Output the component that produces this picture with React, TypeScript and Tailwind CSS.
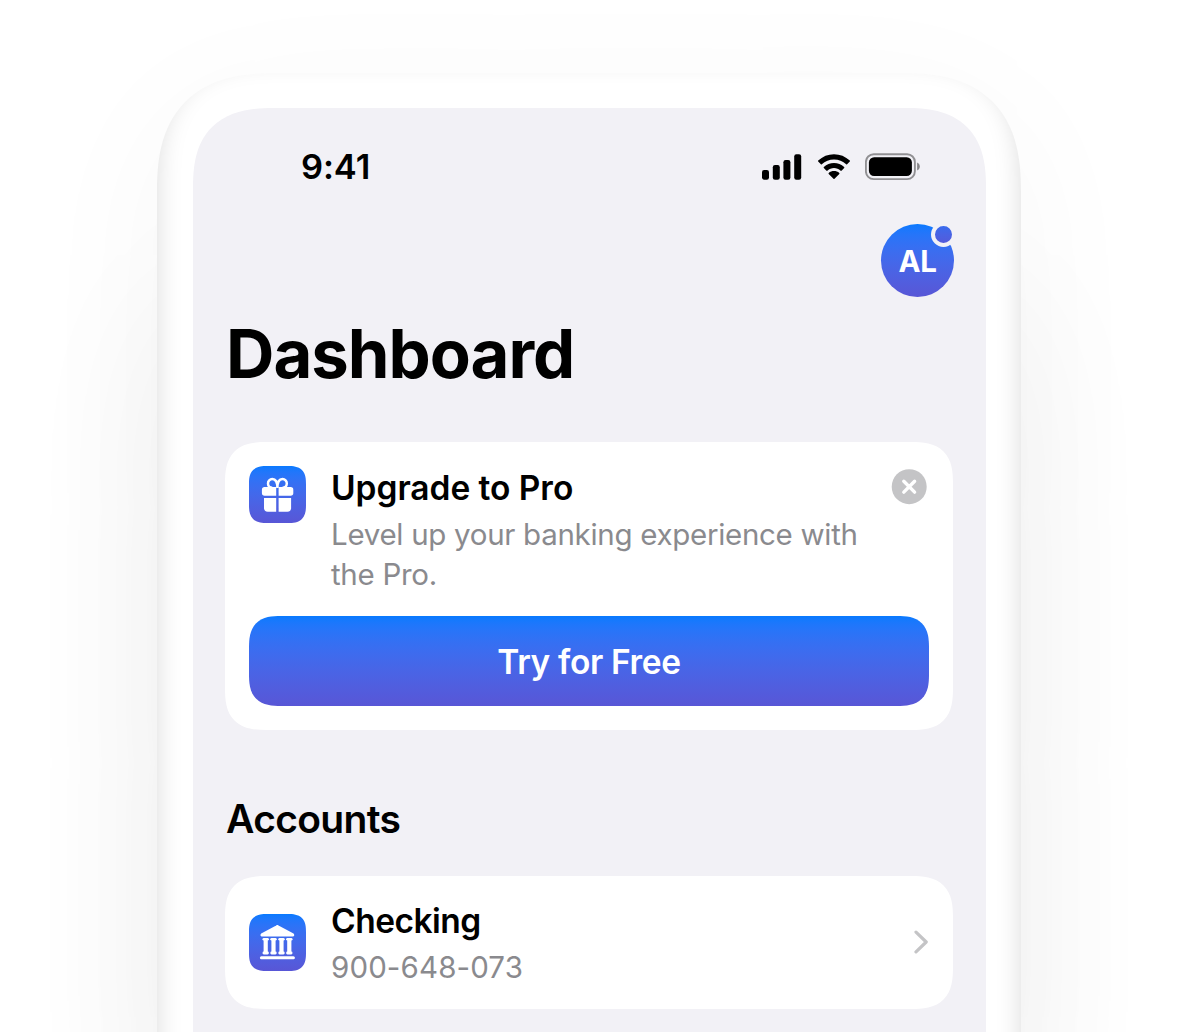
import type { ReactNode } from "react";

function SignalIcon() {
  return (
    <svg className="h-[26px] w-[40px]" viewBox="0 0 40 26" fill="#000">
      <rect x="0" y="16" width="7" height="9.7" rx="2.2" />
      <rect x="10.8" y="11" width="7" height="14.7" rx="2.2" />
      <rect x="21.4" y="6" width="7" height="19.7" rx="2.2" />
      <rect x="32.2" y="0.2" width="7" height="25.5" rx="2.2" />
    </svg>
  );
}

function WifiIcon() {
  return (
    <svg className="h-[26px] w-[34px]" viewBox="0 0 34 26" fill="#000">
      <path d="M17 5.400c4.600 0 8.900 1.750 12.200 4.900.25.24.65.24.9 0l2.700-2.700c.3-.28.3-.73 0-1C28.500 2.400 22.900.2 17 .2S5.500 2.400 1.200 6.600c-.3.27-.3.72 0 1l2.700 2.700c.25.24.65.24.9 0C8.100 7.150 12.400 5.400 17 5.400Z" />
      <path d="M17 14.100c2.450 0 4.800.9 6.600 2.550.27.24.67.24.93-.02l2.650-2.700c.28-.28.28-.73-.02-1C24.400 10.350 20.800 8.900 17 8.900S9.600 10.350 6.840 12.930c-.3.27-.3.72-.02 1l2.650 2.700c.26.26.66.26.93.02C12.200 15 14.550 14.100 17 14.100Z" />
      <path d="M22.300 19.900c.28-.28.27-.73-.03-.98C20.800 17.700 18.950 17.100 17 17.100s-3.800.6-5.270 1.820c-.3.25-.31.7-.03.98l4.800 4.850c.28.28.72.28 1 0Z" />
    </svg>
  );
}

function BatteryIcon() {
  return (
    <svg className="h-[28px] w-[56px]" viewBox="0 0 56 28">
      <rect x="0.900" y="1.200" width="49" height="24.900" rx="7.800" fill="none" stroke="#000" strokeOpacity="0.4" strokeWidth="1.900" />
      <rect x="3.900" y="4.200" width="43" height="18.800" rx="5.200" fill="#000" />
      <path d="M52.100 9.600v8c1.700-.7 2.700-2.200 2.700-4s-1-3.300-2.700-4Z" fill="#000" fillOpacity="0.45" />
    </svg>
  );
}

function GiftIcon() {
  return (
    <svg className="size-[57px]" viewBox="0 0 57 57" fill="#fff">
      <path
        d="M28.400 22C28.400 15.600 26.500 13 23.300 13a4.300 4.300 0 0 0-4.300 4.400c0 2.300 1.600 4.300 4.300 4.300M28.400 22C28.400 15.600 30.300 13 33.500 13a4.300 4.300 0 0 1 4.300 4.400c0 2.300-1.600 4.300-4.300 4.300"
        fill="none"
        stroke="#fff"
        strokeWidth="2.500"
      />
      <path d="M15.600 21h11.600v8.800H15.600a2.700 2.700 0 0 1-2.700-2.700v-3.400A2.700 2.700 0 0 1 15.600 21Z" />
      <path d="M29.600 21h12a2.700 2.700 0 0 1 2.700 2.700v3.400a2.700 2.700 0 0 1-2.700 2.700h-12Z" />
      <path d="M15 32h12.200v13.700h-8.400a3.800 3.800 0 0 1-3.800-3.800Z" />
      <path d="M29.600 32h12.500v9.900a3.800 3.800 0 0 1-3.800 3.800h-8.700Z" />
    </svg>
  );
}

function Column({ x }: { x: number }) {
  return (
    <g transform={`translate(${x} 0)`}>
      <rect x="0" y="24" width="6.400" height="2.600" rx="1.300" />
      <path d="M1.100 26h4.200v12H1.100Z" />
      <rect x="0" y="37.600" width="6.400" height="2.800" rx="1.300" />
    </g>
  );
}

function BankIcon() {
  return (
    <svg className="size-[57px]" viewBox="0 0 57 57" fill="#fff">
      <path d="M27.200 11.400c.8-.4 1.500-.4 2.300 0l15 8.100c1 .6 1.100 3-.4 3H12.600c-1.500 0-1.400-2.400-.4-3Z" />
      <Column x={13.500} />
      <Column x={21.300} />
      <Column x={29.300} />
      <Column x={37.100} />
      <rect x="10.900" y="42.300" width="35" height="3" rx="1.500" />
    </svg>
  );
}

function CloseIcon() {
  return (
    <svg className="size-[36px]" viewBox="0 0 36 36">
      <circle cx="18.200" cy="17.700" r="17.500" fill="#c4c4c6" />
      <path d="M12.800 12.300l10.800 10.800M23.600 12.300l-10.800 10.800" stroke="#fff" strokeWidth="3.400" strokeLinecap="round" />
    </svg>
  );
}

function ChevronIcon() {
  return (
    <svg className="mb-px h-[24px] w-[15px]" viewBox="0 0 15 24" fill="none">
      <path d="M2 2.100l10.200 9.900L2 21.900" stroke="#c4c4c6" strokeWidth="3.200" strokeLinecap="round" strokeLinejoin="round" />
    </svg>
  );
}

function Tile({ children }: { children: ReactNode }) {
  return (
    <div className="size-[57px] shrink-0 overflow-hidden rounded-[18px] bg-linear-to-b from-[#077aff] to-[#5856d6] [corner-shape:superellipse(1.44)]">
      {children}
    </div>
  );
}

export default function App() {
  return (
    <div className="flex h-[1032px] w-[1179px] justify-center overflow-hidden bg-white pt-[73px] pr-px font-[Inter,sans-serif] text-black">
      <div className="h-[1750px] w-[864px] shrink-0 rounded-[120px] bg-white p-[36px] pt-[35px] shadow-[0_30px_150px_0_rgba(0,0,0,0.035),0_210px_150px_0_rgba(0,0,0,0.055),inset_0_-14px_26px_0_rgba(0,0,0,0.15)] [corner-shape:superellipse(1.35)]">
        <main className="-mr-px h-full rounded-[80px] bg-[#f2f1f6] pr-[33px] pl-[32px] [corner-shape:superellipse(1.35)]">
          <div className="flex h-[116px] items-start justify-between pr-[32px] pl-[76px]">
            <time className="mt-[39px] text-[34.500px] leading-[40px] font-semibold tracking-[-0.100px]">9:41</time>
            <div className="mt-[45px] flex items-center gap-[14.500px]">
              <SignalIcon />
              <WifiIcon />
              <BatteryIcon />
            </div>
          </div>
          <header className="flex flex-col">
            <div className="relative -mr-px flex size-[73px] items-center justify-center self-end rounded-full bg-linear-to-b from-[#077aff] to-[#5856d6] pt-px text-[29.500px] font-bold tracking-[-0.300px] text-white">
              AL
              <span className="absolute -top-[2px] -right-[2px] size-[25px] rounded-full border-[4px] border-[#f2f1f6] bg-linear-to-b from-[#2e6ff2] to-[#5856d6] bg-origin-border" />
            </div>
            <h1 className="mt-[17px] pl-px text-[67px] leading-[80px] font-bold tracking-[-1px]">Dashboard</h1>
          </header>
          <section className="mt-[48px] h-[288px] rounded-[42px] bg-white px-[24px] pt-[24px] [corner-shape:superellipse(1.44)]">
            <div className="flex h-[150px] items-start">
              <Tile>
                <GiftIcon />
              </Tile>
              <div className="mt-px ml-[25px] flex-1">
                <h2 className="text-[33.500px] leading-[42px] font-semibold tracking-[-0.040px]">Upgrade to Pro</h2>
                <p className="mt-[5px] text-[29.500px] leading-[40px] tracking-[-0.300px] whitespace-nowrap text-[#8a8a8e]">
                  Level up your banking experience with
                  <br />
                  the Pro.
                </p>
              </div>
              <button aria-label="Dismiss" className="mt-[3px] mr-[2px]">
                <CloseIcon />
              </button>
            </div>
            <button className="h-[90px] w-full rounded-[32px] bg-linear-to-b from-[#077aff] to-[#5856d6] pt-[2px] text-[33.500px] font-semibold tracking-[-0.350px] text-white [corner-shape:superellipse(1.44)]">
              Try for Free
            </button>
          </section>
          <h2 className="mt-[65px] pl-px text-[39px] leading-[48px] font-semibold tracking-[-0.650px]">Accounts</h2>
          <section className="mt-[33px] flex h-[133px] items-center rounded-[42px] bg-white px-[24px] [corner-shape:superellipse(1.44)]">
            <Tile>
              <BankIcon />
            </Tile>
            <div className="mt-[2px] ml-[25px] flex-1">
              <h3 className="text-[33.500px] leading-[42px] font-semibold tracking-[-0.500px]">Checking</h3>
              <p className="mt-[5px] text-[29.500px] leading-[40px] tracking-[0.120px] text-[#8a8a8e]">900-648-073</p>
            </div>
            <ChevronIcon />
          </section>
        </main>
      </div>
    </div>
  );
}
